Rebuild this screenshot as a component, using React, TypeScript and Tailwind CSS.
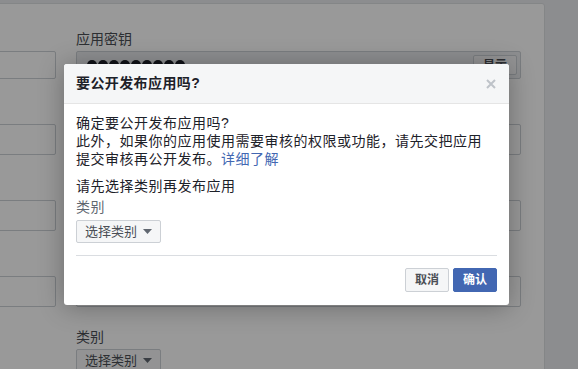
const font = { fontFamily: '"Liberation Sans", "Noto Sans CJK SC", sans-serif' };

function Caret() {
  return (
    <svg width="9" height="5" viewBox="0 0 9 5" className="ml-[6px]">
      <path d="M0 0h9L4.5 5z" fill="#606770" />
    </svg>
  );
}

function Field({ label, first }: { label?: string; first?: boolean }) {
  return (
    <div className={first ? "" : "mt-[24px]"}>
      <div className="h-[18px] text-[14px] leading-[18px] text-[#4b4f56]">{label}</div>
      <div
        className={`mt-[3px] rounded-[2px] border border-[#ccd0d5] bg-white ${first ? "h-[28px]" : "h-[31px]"}`}
      />
    </div>
  );
}

export default function App() {
  return (
    <div className="relative h-[369px] w-[578px] overflow-hidden bg-[#e9ebee]" style={font}>
      {/* page behind the dialog; left column runs off the left edge */}
      <div className="-ml-[261px] mt-[3px] h-[400px] w-[806px] rounded-[3px] border border-[#dddfe2] bg-white pr-[23px]">
        <div className="grid grid-cols-[316px_445px] gap-x-[20px] pt-[26px]">
          <div>
            <Field first />
            <Field />
            <Field />
            <Field />
          </div>
          <div>
            <div>
              <div className="text-[14px] leading-[18px] text-[#4b4f56]">应用密钥</div>
              <div className="mt-[3px] flex h-[28px] items-center justify-between rounded-[2px] border border-[#ccd0d5] bg-[#ebedf0] pl-[10px] pr-[3px]">
                <div className="flex gap-[1px]">
                  {Array.from({ length: 9 }).map((_, i) => (
                    <span key={i} className="h-[10px] w-[10px] rounded-full bg-[#1d2129]" />
                  ))}
                </div>
                <span className="flex h-[20px] w-[44px] items-center justify-center rounded-[2px] border border-[#ccd0d5] bg-[#f5f6f7] text-[12px] font-bold text-[#4b4f56]">
                  显示
                </span>
              </div>
            </div>
            <Field label="联系邮箱" />
            <Field label="服务条款网址" />
            <Field label="应用图标" />
            <div className="mt-[21px]">
              <div className="text-[14px] leading-[18px] text-[#4b4f56]">类别</div>
              <div className="mt-[3px] inline-flex h-[23px] items-center rounded-[2px] border border-[#ccd0d5] bg-[#f5f6f7] px-[8px] text-[13px] text-[#4b4f56]">
                选择类别
                <Caret />
              </div>
            </div>
          </div>
        </div>
      </div>

      {/* overlay */}
      <div className="absolute inset-0 bg-black/40" />

      {/* dialog */}
      <div className="absolute left-[64px] top-[64px] w-[445px] overflow-hidden rounded-[3px] bg-white shadow-[0_2px_26px_rgba(0,0,0,0.3)]">
        <div className="flex h-[40px] items-center justify-between border-b border-[#e5e5e5] bg-[#f5f6f7] px-[12px]">
          <span className="text-[14px] font-bold tracking-[0.4px] text-[#1d2129]">要公开发布应用吗?</span>
          <svg width="10" height="10" viewBox="0 0 10 10" className="mr-[1px]">
            <path d="M1 1l8 8M9 1l-8 8" stroke="#bec3c9" strokeWidth="2" />
          </svg>
        </div>
        <div className="px-[12px] pb-[13px] pt-[10px] text-[14px] leading-[18px] tracking-[0.5px] text-[#1d2129]">
          <p>确定要公开发布应用吗?</p>
          <p>
            此外，如果你的应用使用需要审核的权限或功能，请先交把应用
            <br />
            提交审核再公开发布。<span className="text-[#4267b2]">详细了解</span>
          </p>
          <p className="mt-[9px]">请先选择类别再发布应用</p>
          <p className="mt-[3px] text-[#606770]">类别</p>
          <div className="mt-[4px] inline-flex h-[23px] items-center rounded-[2px] border border-[#ccd0d5] bg-[#f5f6f7] px-[8px] text-[13px] tracking-normal text-[#4b4f56]">
            选择类别
            <Caret />
          </div>
          <div className="mt-[12px] border-t border-[#dadde1]" />
          <div className="mt-[12px] flex justify-end gap-[4px] tracking-normal">
            <button className="h-[24px] w-[44px] rounded-[2px] border border-[#ccd0d5] bg-[#f5f6f7] text-[12px] font-bold text-[#4b4f56]">
              取消
            </button>
            <button className="h-[24px] w-[44px] rounded-[2px] border border-[#4267b2] bg-[#4267b2] text-[12px] font-bold text-white">
              确认
            </button>
          </div>
        </div>
      </div>
    </div>
  );
}
